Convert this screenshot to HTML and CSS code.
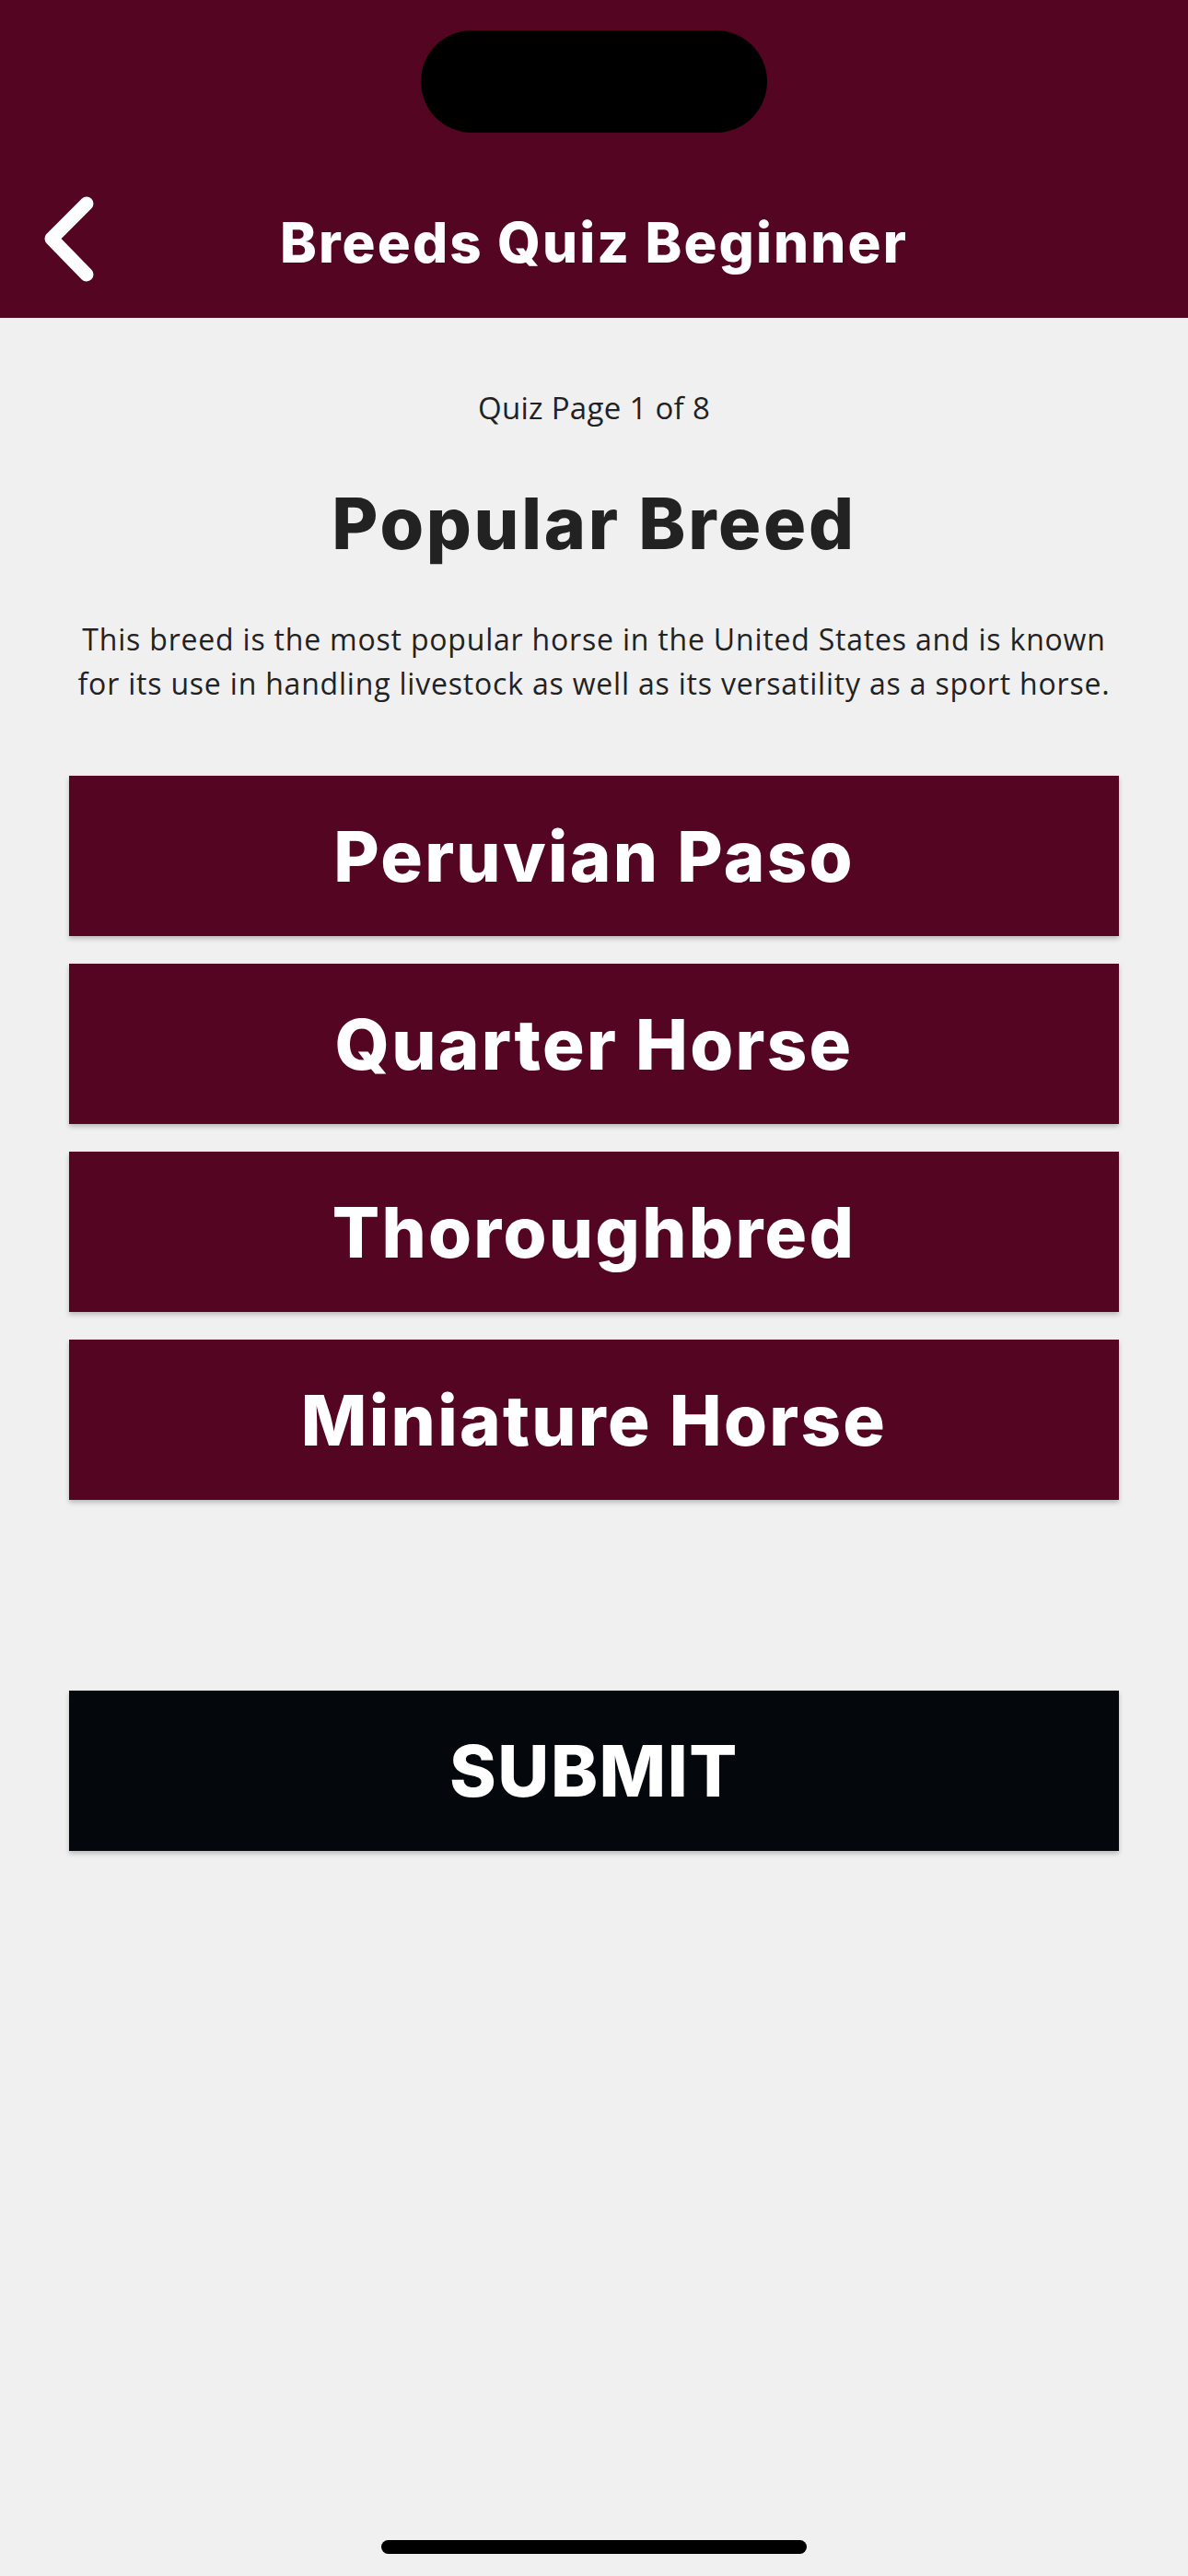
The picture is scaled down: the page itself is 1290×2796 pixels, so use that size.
FILE: index.html
```html
<!DOCTYPE html>
<html lang="en">
<head>
<meta charset="utf-8">
<title>Breeds Quiz Beginner</title>
<link rel="stylesheet" href="styles.css">
</head>
<body>
<div class="screen">
  <header class="header">
    <div class="island"></div>
    <nav class="nav">
      <button class="back" aria-label="Back">
        <svg width="70" height="110" viewBox="0 0 70 110">
          <polyline points="49,14 11,52 49,91" fill="none" stroke="#ffffff" stroke-width="15" stroke-linecap="round" stroke-linejoin="round"/>
        </svg>
      </button>
      <h1 class="title">Breeds Quiz Beginner</h1>
    </nav>
  </header>

  <main class="content">
    <p class="page-count">Quiz Page 1 of 8</p>
    <h2 class="question-title">Popular Breed</h2>
    <p class="question-text">This breed is the most popular horse in the United States and is known for its use in handling livestock as well as its versatility as a sport horse.</p>

    <div class="options">
      <button class="option">Peruvian Paso</button>
      <button class="option">Quarter Horse</button>
      <button class="option">Thoroughbred</button>
      <button class="option">Miniature Horse</button>
    </div>

    <button class="submit">SUBMIT</button>
  </main>

  <div class="home-indicator"></div>
</div>
</body>
</html>
```

FILE: styles.css
```css
* {
  box-sizing: border-box;
}

html, body {
  margin: 0;
  padding: 0;
}

body {
  background: #f0f0f0;
  font-family: "Open Sans", "Noto Sans", sans-serif;
  color: #222222;
}

.screen {
  position: relative;
  width: 1290px;
  min-height: 2796px;
  background: #f0f0f0;
}

.header {
  height: 345px;
  background: #530521;
  padding-top: 33px;
}

.island {
  width: 376px;
  height: 111px;
  margin: 0 auto;
  background: #000000;
  border-radius: 56px;
}

.nav {
  position: relative;
  height: 160px;
  margin-top: 45px;
  display: flex;
  align-items: center;
  justify-content: center;
}

.back {
  position: absolute;
  left: 45px;
  top: 18px;
  width: 70px;
  height: 110px;
  padding: 0;
  border: 0;
  background: transparent;
  display: flex;
}

.title {
  margin: 0 0 12px 0;
  font-family: "Inter", "Liberation Sans", sans-serif;
  font-weight: 800;
  font-size: 60px;
  letter-spacing: 0.035em;
  line-height: 1;
  color: #ffffff;
}

.content {
  padding: 74px 75px 0;
  display: flex;
  flex-direction: column;
  align-items: center;
}

.page-count {
  margin: 0;
  font-size: 33px;
  letter-spacing: 0.3px;
  line-height: 48px;
  color: #222222;
  text-align: center;
}

.question-title {
  margin: 63px 0 0;
  font-family: "Inter", "Liberation Sans", sans-serif;
  font-weight: 800;
  font-size: 77px;
  letter-spacing: 0.035em;
  line-height: 1;
  color: #222222;
  text-align: center;
}

.question-text {
  margin: 63px 0 0;
  width: 1140px;
  font-size: 32px;
  letter-spacing: 0.8px;
  line-height: 48px;
  color: #222222;
  text-align: center;
}

.options {
  width: 1140px;
  margin-top: 76px;
  display: flex;
  flex-direction: column;
  gap: 30px;
}

.option,
.submit {
  display: flex;
  align-items: center;
  justify-content: center;
  width: 1140px;
  height: 174px;
  padding: 0;
  border: 0;
  border-radius: 0;
  font-family: "Inter", "Liberation Sans", sans-serif;
  font-weight: 800;
  font-size: 76px;
  letter-spacing: 0.03em;
  line-height: 1;
  color: #ffffff;
  box-shadow: 0 3px 5px rgba(0, 0, 0, 0.22);
}

.option {
  background: #530521;
}

.submit {
  margin-top: 207px;
  background: #04080c;
  font-size: 77px;
  letter-spacing: 0.02em;
}

.home-indicator {
  position: absolute;
  left: 414px;
  bottom: 24px;
  width: 462px;
  height: 15px;
  border-radius: 8px;
  background: #000000;
}
```
